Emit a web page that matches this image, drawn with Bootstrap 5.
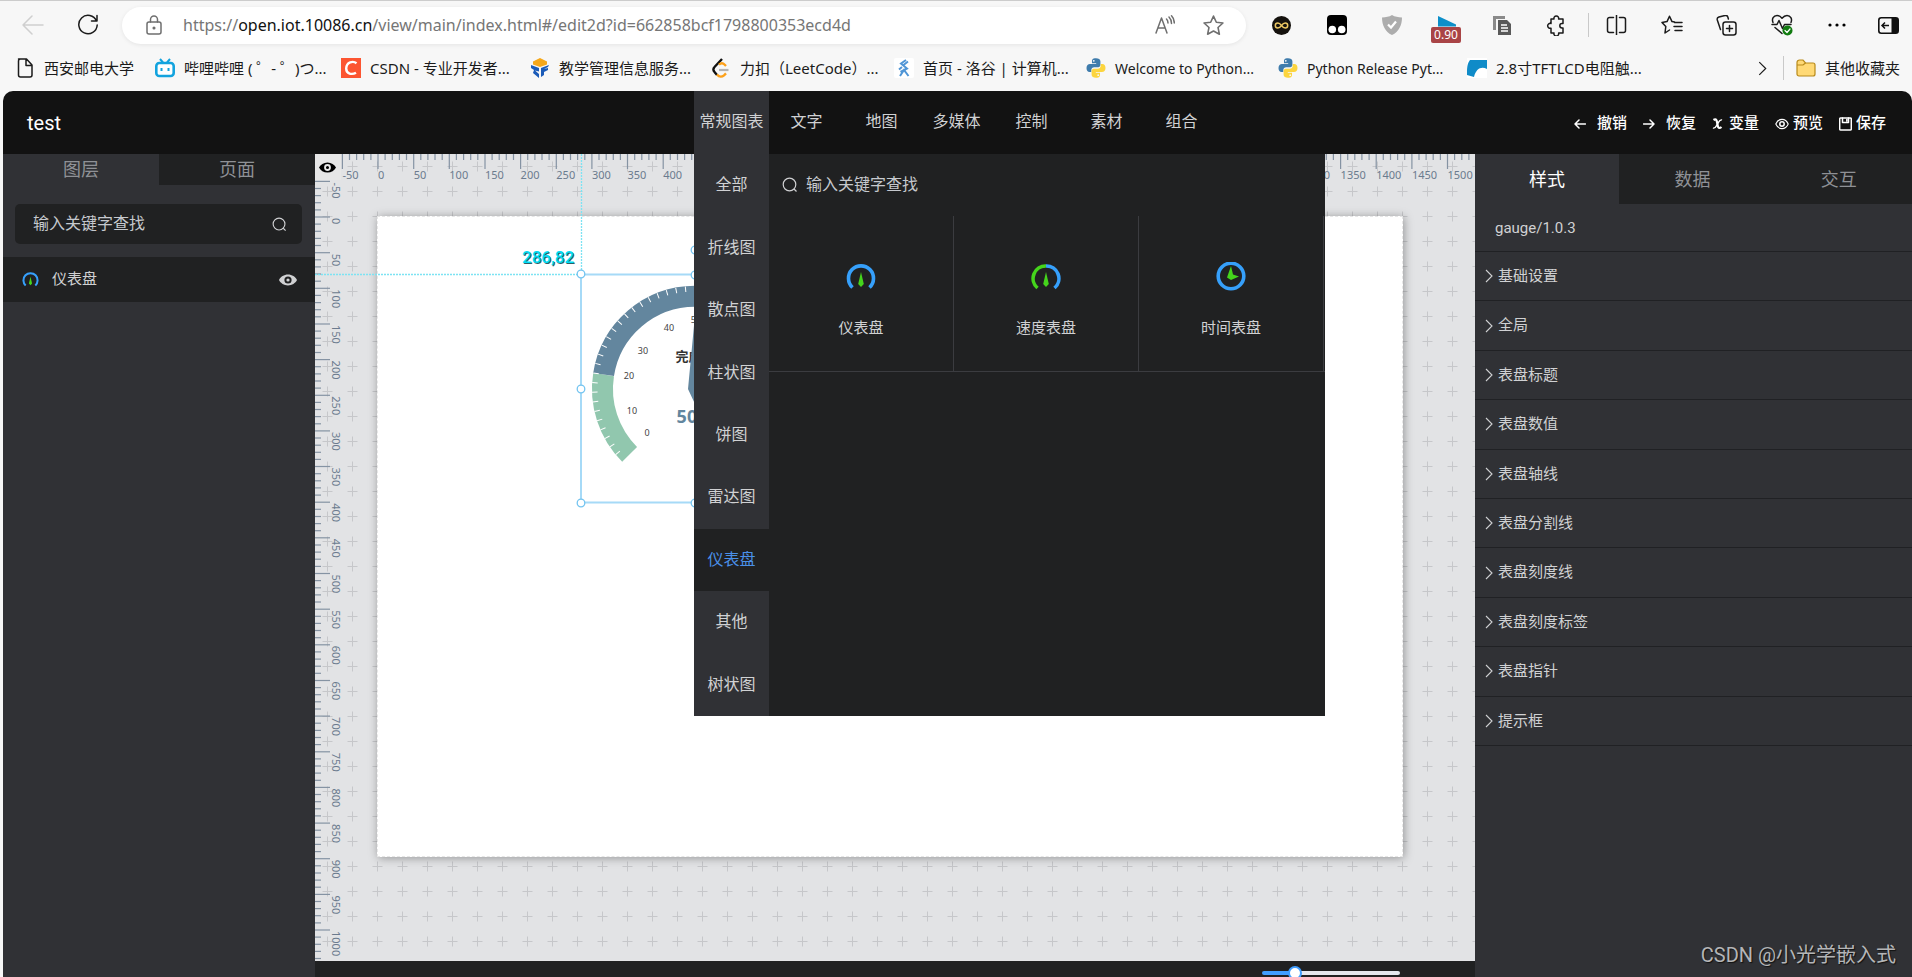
<!DOCTYPE html>
<html lang="zh-CN">
<head>
<meta charset="utf-8">
<meta name="viewport" content="width=device-width, initial-scale=1">
<title>test</title>
<link href="https://cdn.jsdelivr.net/npm/bootstrap@5.3.0/dist/css/bootstrap.min.css" rel="stylesheet">
<style>
  :root { --panel:#303135; --deep:#202122; --bar:#121212; --ink:#d0d1d3; --muted:#8f9196; }
  body { font-family: Roboto, "Noto Sans CJK SC", sans-serif; background:#f7f7f7; color:var(--ink); font-size:15px; }
  button { background:none; border:0; padding:0; color:inherit; }
  svg { display:block; flex:none; }
  .ln { fill:none; stroke:currentColor; stroke-width:1.5; stroke-linecap:round; stroke-linejoin:round; }

  /* browser chrome */
  .chrome { font-family:"Noto Sans","Noto Sans CJK SC",sans-serif; color:#1b1b1b; border-top:1px solid #ccc; }
  .toolbar { height:48px; padding-left:5px; }
  .tool { width:55px; height:40px; display:flex; align-items:center; justify-content:center; position:relative; flex:none; }
  .tool.edge { width:48px; }
  .rate { position:absolute; left:12px; top:22px; width:30px; height:16px; border-radius:2px; background:#a94446; color:#fff; font-size:12px; line-height:16px; }
  .address { height:37px; border-radius:19px; background:#fff; margin:0 8px 0 7px; padding:0 22px 0 24px; box-shadow:0 1px 4px rgba(0,0,0,.08); color:#6f6f6f; }
  .url { font-size:16px; color:#767676; white-space:nowrap; margin-left:21px; }
  .url b { font-weight:400; color:#111; }
  .vline { width:1px; height:24px; background:#c9c9c9; }
  .marks { height:42px; padding:0 12px 4px 15px; font-size:15px; }
  .marks a { color:#1b1b1b; text-decoration:none; display:flex; align-items:center; gap:9px; white-space:nowrap; margin-right:20px; }
  .marks a span { width:140px; }
  .marks a:nth-child(1) span { width:91px; }
  .marks a:nth-child(2) span { width:137px; }
  .marks a:nth-child(4) span { width:132px; }
  .marks a:nth-child(5) span { width:134px; }
  .marks a:nth-child(6) span, .marks a:nth-child(7) span { width:143px; }
  .marks a.latin { font-size:14px; }

  /* application */
  .app { margin-left:3px; border-radius:10px 10px 0 0; background:var(--bar); min-height:0; position:relative; }
  .topbar { height:63px; color:#fff; }
  .topbar h1 { font-size:20px; font-weight:400; padding-left:24px; }
  .kinds { position:relative; z-index:5; height:63px; font-size:16px; color:var(--ink); }
  .kinds > button { width:75px; padding-bottom:2px; white-space:nowrap; }
  .kinds > .active { background:var(--panel); }
  .mega { position:absolute; left:0; top:63px; width:631px; height:562px; background:var(--deep); }
  .groups { width:75px; background:var(--panel); }
  .groups button { flex:1 1 0; }
  .groups .active { background:var(--deep); color:#4a90e8; }
  .find { background:transparent; border:0; color:#c6c9ce; font-size:16px; padding:0; outline:0; }
  .find::placeholder { color:#c6c9ce; opacity:1; }
  .seek { height:62px; padding-left:13px; gap:8px; }
  .tiles { display:grid; grid-template-columns:repeat(3,1fr); padding-right:1px; border-bottom:1px solid #3b3c40; font-size:15px; }
  .tiles button { height:155px; padding-top:13px; border-right:1px solid #3b3c40; display:flex; flex-direction:column; align-items:center; justify-content:center; gap:25px; line-height:22px; }
  .acts { gap:16px; padding:2px 26px 0 0; font-weight:500; }
  .acts button { display:flex; align-items:center; gap:6px; font-weight:500; }
  .acts .wide { gap:11px; }
  .acts .snug { gap:4px; }

  .side-l { width:312px; background:var(--panel); }
  .side-l .tabs button { height:31px; flex:1 1 0; font-size:18px; line-height:31px; color:var(--muted); }
  .tabs button:not(.active) { background:var(--deep); }
  .searchbox { height:40px; margin:19px 13px 13px 12px; background:var(--deep); border-radius:5px; padding:0 15px 0 18px; }
  .layer { height:45px; background:var(--deep); padding:0 18px 0 19px; gap:13px; }

  .stage { background:#e2e3e5; min-height:0; }
  .stage svg.full { position:absolute; inset:0; width:100%; height:100%; }
  .paper { position:absolute; left:62px; top:62px; width:1026px; height:641px; background:#fff; border:1px dashed #e6e6e6; box-shadow:1px 1px 9px rgba(0,0,0,.35); }
  .corner { position:absolute; left:0; top:0; width:26px; height:26px; background:#e7e7e7; color:#000; display:flex; align-items:center; justify-content:center; padding-right:2px; }
  .rl { font:11px "Noto Sans",sans-serif; fill:#6b7b8e; stroke:none; }
  .g { font:9px "Noto Sans",sans-serif; fill:#444; text-anchor:middle; }
  .pos { font:500 17px Roboto,sans-serif; fill:#00dcf5; text-shadow:1px 1px 0 #2a6068; }
  .zoombar { height:16px; background:var(--deep); overflow:hidden; padding-right:75px; }
  .zoombar input { appearance:none; width:138px; height:24px; margin:0; background:none; flex:none; }
  .zoombar input::-webkit-slider-runnable-track { height:4px; border-radius:2px; background:linear-gradient(90deg,#409eff 24%,#e4e7ed 24%); }
  .zoombar input::-webkit-slider-thumb { appearance:none; width:14px; height:14px; margin-top:-5px; border-radius:50%; background:#fff; border:2px solid #409eff; }

  .side-r { width:437px; background:var(--panel); }
  .side-r .tabs button { height:50px; flex:1 1 0; font-size:18px; color:var(--muted); }
  .side-r .tabs .active { color:#fff; flex:0 0 33%; }
  .ver { height:48px; padding:2px 0 0 20px; font-size:15px; border-bottom:1px solid #202124; }
  .folds { height:494px; }
  .folds button { flex:1 1 0; text-align:left; padding-left:10px; border-bottom:1px solid #202124; display:flex; align-items:center; gap:5px; }
  .stamp { position:absolute; right:16px; bottom:7px; font:20px/30px Roboto,"Noto Sans CJK SC",sans-serif; color:#b4b5b7; text-shadow:1px 1px 1px #111; z-index:6; }
</style>
</head>
<body class="vh-100 d-flex flex-column overflow-hidden">

<svg width="0" height="0" class="position-absolute">
  <defs>
    <symbol id="search" viewBox="0 0 16 16"><circle cx="7.500" cy="7.500" r="6.300" fill="none" stroke="currentColor" stroke-width="1.200"/><path d="M12 12l2.500 2.500" stroke="currentColor" stroke-width="1.200"/></symbol>
    <symbol id="eye" viewBox="0 0 20 12"><path d="M10 0C5.500 0 1.800 2.500 0 6c1.800 3.500 5.500 6 10 6s8.200-2.500 10-6C18.200 2.500 14.500 0 10 0zm0 10a4 4 0 1 1 0-8 4 4 0 0 1 0 8zm0-2.200A1.800 1.800 0 1 0 10 4.200a1.800 1.800 0 0 0 0 3.600z" fill="currentColor" fill-rule="evenodd"/></symbol>
    <symbol id="gauge" viewBox="0 0 30 30"><path d="M6.500 25.500A12.500 12.500 0 1 1 23.500 25.500" fill="none" stroke="#36a0fb" stroke-width="3.600"/><path d="M15 10l2.800 12L15 25l-2.800-3z" fill="#45d51c"/></symbol>
    <symbol id="python" viewBox="0 0 20 20"><path fill="#3f7cac" d="M10 .3C6.200.3 6 2 6 3.300v2h4.200v.8H4C2 6.100.5 7.500.5 10s1.300 4 3 4h1.800v-2c0-1.600 1.300-2.800 2.900-2.800h4c1.300 0 2.200-1 2.200-2.200V3.300C14.400 1.500 12.500.3 10 .3zM7.800 1.900a.9.900 0 1 1 0 1.800.9.900 0 0 1 0-1.800z"/><path transform="rotate(180 10 10)" fill="#fcd53f" d="M10 .3C6.200.3 6 2 6 3.300v2h4.200v.8H4C2 6.100.5 7.500.5 10s1.300 4 3 4h1.800v-2c0-1.600 1.300-2.800 2.900-2.800h4c1.300 0 2.200-1 2.200-2.200V3.300C14.400 1.500 12.500.3 10 .3zM7.800 1.900a.9.900 0 1 1 0 1.800.9.900 0 0 1 0-1.800z"/></symbol>
    <symbol id="chev" viewBox="0 0 8 14"><path d="M1 1l6 6-6 6" fill="none" stroke="currentColor" stroke-width="1.100"/></symbol>
  </defs>
</svg>

<header class="chrome flex-shrink-0">
  <div class="toolbar d-flex align-items-center">
    <button class="tool" aria-label="后退"><svg class="ln" width="22" height="20" viewBox="0 0 22 20" color="#cfcfcf"><path d="M21 10H1M10 1L1 10l9 9"/></svg></button>
    <button class="tool" aria-label="刷新"><svg class="ln" width="22" height="22" viewBox="0 0 22 22" stroke-width="1.800"><path d="M19.500 7A9.200 9.200 0 1 0 20.200 11M20 1.500V7h-5.500"/></svg></button>
    <div class="address d-flex align-items-center flex-grow-1">
      <svg class="ln" width="16" height="20" viewBox="0 0 16 20"><rect x="1" y="7" width="14" height="12" rx="2"/><path d="M4.500 7V4.500a3.500 3.500 0 0 1 7 0V7"/><circle cx="8" cy="13" r=".8" fill="currentColor"/></svg>
      <div class="url flex-grow-1" role="textbox" aria-label="地址">https://<b>open.iot.10086.cn</b>/view/main/index.html#/edit2d?id=662858bcf1798800353ecd4d</div>
      <button aria-label="朗读" class="me-4 pe-1"><svg class="ln" width="20" height="20" viewBox="0 0 20 20"><path d="M1 18L6.500 3 12 18M3 13h7M11.500 4c1 1 1.500 2.500 1.500 4M14 2c1.500 1.500 2.500 3.800 2.500 6.500M16.500.800C18.300 2.600 19.300 5 19.300 8"/></svg></button>
      <button aria-label="收藏"><svg class="ln" width="21" height="21" viewBox="0 0 20 20"><path d="M10 1l2.700 5.900 6.300.7-4.700 4.300 1.300 6.400L10 15.200l-5.600 3.100 1.300-6.400L1 7.600l6.300-.7z"/></svg></button>
    </div>
    <button class="tool" aria-label="扩展一"><svg width="19" height="19" viewBox="0 0 19 19"><circle cx="9.500" cy="9.500" r="9.500" fill="#15120e"/><path d="M9.500 9.500C8 7.500 7 7 5.800 7a2.500 2.500 0 0 0 0 5c1.200 0 2.200-.5 3.700-2.500S12 7 13.200 7a2.500 2.500 0 0 1 0 5c-1.200 0-2.200-.5-3.700-2.500z" fill="none" stroke="#ecc763" stroke-width="1.500"/></svg></button>
    <button class="tool" aria-label="扩展二"><svg width="20" height="20" viewBox="0 0 20 20"><rect width="20" height="20" rx="4"/><circle cx="5.300" cy="14.500" r="3.800" fill="#fff"/><circle cx="14.700" cy="14.500" r="3.800" fill="#fff"/></svg></button>
    <button class="tool" aria-label="扩展三"><svg width="20" height="20" viewBox="0 0 20 20"><path d="M10 0c3 1.800 6 2.400 10 2.400C20 10 17 16.500 10 20 3 16.500 0 10 0 2.400 4 2.400 7 1.800 10 0z" fill="#adadad"/><path d="M6 9.500l3 3L14 6.500" fill="none" stroke="#fff" stroke-width="2.200"/></svg></button>
    <button class="tool" aria-label="扩展四"><svg width="20" height="20" viewBox="0 0 20 20"><path d="M1 1l18 8.500v2H1z" fill="#0d8fc9"/></svg><span class="rate">0.90</span></button>
    <button class="tool" aria-label="扩展五"><svg width="20" height="21" viewBox="0 0 20 21"><path d="M1 15V1h12v3H4v11z" fill="#8a8a8a"/><path d="M6 5h9l4 4v11H6z" fill="#595959"/><path d="M9 10h6M9 13h7M9 16h7" stroke="#fff" stroke-width="1.400"/></svg></button>
    <button class="tool" aria-label="扩展"><svg class="ln" width="21" height="21" viewBox="0 0 21 21"><path d="M5 4h3a2.400 2.400 0 1 1 4.600 0H17v4.500h-1a2.200 2.200 0 0 0 0 4.400h1V18h-4.400a2.400 2.400 0 1 1-4.600 0H5v-4.800A2.500 2.500 0 1 1 5 8.500z"/></svg></button>
    <div class="ps-1"><div class="vline"></div></div>
    <button class="tool" aria-label="分屏"><svg class="ln" width="21" height="20" viewBox="0 0 21 20"><path d="M10.500 0v20M7.500 2.500H3.500a2 2 0 0 0-2 2v11a2 2 0 0 0 2 2h4M13.500 2.500h4a2 2 0 0 1 2 2v11a2 2 0 0 1-2 2h-4"/></svg></button>
    <button class="tool" aria-label="收藏夹"><svg class="ln" width="22" height="20" viewBox="0 0 22 20"><path d="M13.500 7L11 6.600 8.500 1.200 6 6.600l-5 .9 3.800 4L4 18l4.500-3M13.500 7.500H21M13 11.500h8M14 15.500h7"/></svg></button>
    <button class="tool" aria-label="集锦"><svg class="ln" width="21" height="21" viewBox="0 0 21 21"><rect x="7" y="7" width="13" height="13" rx="2.500"/><path d="M13.500 10.500v6M10.500 13.500h6M4.500 14.500L1.300 5a2.500 2.500 0 0 1 1.600-3l6-1.500a2.500 2.500 0 0 1 3 1.700l.5 1.800"/></svg></button>
    <button class="tool" aria-label="浏览器概要"><svg class="ln" width="22" height="22" viewBox="0 0 22 22"><path d="M2 8.500C.5 5 2.500 1.500 6 1.500c2 0 3.500 1 5 2.800 1.500-1.800 3-2.800 5-2.800 3.500 0 5.500 3.500 4 7M1 10.500h5l2-4 3.500 8 2-4H20M4 13.500l7 6"/><circle cx="16.500" cy="16.500" r="5" fill="#117b10" stroke="none"/><path d="M14 16.500l2 2 3-3.500" stroke="#fff" stroke-width="1.200"/></svg></button>
    <button class="tool" aria-label="更多"><svg width="18" height="4" viewBox="0 0 18 4"><circle cx="2" cy="2" r="1.600"/><circle cx="9" cy="2" r="1.600"/><circle cx="16" cy="2" r="1.600"/></svg></button>
    <button class="tool edge" aria-label="边栏"><svg width="21" height="17" viewBox="0 0 21 17"><rect x=".8" y=".8" width="19.400" height="15.400" rx="2.500" fill="none" stroke="#111" stroke-width="1.600"/><path d="M13.500 1H20v15h-6.500z" fill="#111"/><path d="M4 8.500h7M7 5.500l-3 3 3 3" fill="none" stroke="#111" stroke-width="1.500"/></svg></button>
  </div>
  <nav class="marks d-flex align-items-center">
    <a href="#"><svg class="ln" width="20" height="20" viewBox="0 0 20 20"><path d="M3.500 1h8l5.500 6v10a2 2 0 0 1-2 2h-9.500a2 2 0 0 1-2-2V3a2 2 0 0 1 2-2M11 1v6.500h6"/></svg><span>西安邮电大学</span></a>
    <a href="#"><svg width="20" height="20" viewBox="0 0 20 20"><path d="M5 1l3 3.500M15 1l-3 3.500" stroke="#13a3de" stroke-width="2"/><rect x="1.300" y="5" width="17.400" height="13" rx="3" fill="#fff" stroke="#13a3de" stroke-width="2.600"/><path d="M6.500 10v3M13.500 10v3" stroke="#13a3de" stroke-width="2"/></svg><span>哔哩哔哩 ( ゜- ゜)つ...</span></a>
    <a href="#"><svg width="20" height="20" viewBox="0 0 20 20"><rect width="20" height="20" fill="#fc5531"/><path d="M15.500 5.200C12 2.600 5.500 4 5.200 10.500c0 5.500 5.800 6.500 9.800 4.200" fill="none" stroke="#fff" stroke-width="2.400"/></svg><span>CSDN - 专业开发者...</span></a>
    <a href="#"><svg width="20" height="20" viewBox="0 0 20 20"><path d="M10 0l7 3.500v3L10 9 3 6.500v-3z" fill="#f6a81a"/><path d="M1 7l8 3v3.500l-4-1 4 3.500v4l-6-5 1-3-3-2zM19 7l-8 3v9l3-2v-3l4-2v-2l-4 1 4-2z" fill="#1b5bb8"/></svg><span>教学管理信息服务...</span></a>
    <a href="#"><svg width="20" height="20" viewBox="0 0 20 20"><path d="M11 1L3.500 9c-1.500 1.500-1.500 3.500 0 5L6 17" fill="none" stroke="#111" stroke-width="2.400"/><path d="M8 6.500c2-1.600 4-1.600 5.500 0l1.500 1.500M6 16.500c2.500 3 5 2.500 7 .8l2-2" fill="none" stroke="#fda11a" stroke-width="2.400"/><path d="M8 12h9.500" stroke="#b3b3b3" stroke-width="2.200"/></svg><span>力扣（LeetCode）...</span></a>
    <a href="#"><svg width="20" height="20" viewBox="0 0 20 20"><rect width="20" height="20" rx="2" fill="#fff"/><path d="M12 2L7 5.500l6 5-6.500 3.500M8 9l-3 2.500M6 18l4-6 4.500 6M14 3.500L9.500 7" fill="none" stroke="#4f95d6" stroke-width="2"/></svg><span>首页 - 洛谷 | 计算机...</span></a>
    <a href="#" class="latin"><svg width="20" height="20"><use href="#python"/></svg><span>Welcome to Python...</span></a>
    <a href="#" class="latin"><svg width="20" height="20"><use href="#python"/></svg><span>Python Release Pyt...</span></a>
    <a href="#"><svg width="20" height="20" viewBox="0 0 20 20"><rect width="20" height="20" fill="#fff"/><path d="M3 2h17v9c-6-3-11 0-13 8L0 17C0 10 0 6 3 2z" fill="#0f8bc8"/></svg><span>2.8寸TFTLCD电阻触...</span></a>
    <div class="ms-auto d-flex align-items-center">
      <button aria-label="更多书签"><svg width="9" height="15"><use href="#chev"/></svg></button>
      <div class="vline ms-3 me-2"></div>
      <a href="#" class="m-0 ms-1"><svg width="20" height="18" viewBox="0 0 20 18"><path d="M1 3.500A2.500 2.500 0 0 1 3.500 1H7l2.500 3H17a2 2 0 0 1 2 2v9a2 2 0 0 1-2 2H3a2 2 0 0 1-2-2z" fill="#ffd975" stroke="#b88a1a" stroke-width="1.200"/><path d="M1 6h6l2.500-2" fill="none" stroke="#b88a1a" stroke-width="1.200"/></svg><span class="w-auto">其他收藏夹</span></a>
    </div>
  </nav>
</header>

<main class="app flex-grow-1 d-flex flex-column">
  <div class="topbar d-flex flex-shrink-0 align-items-center">
    <h1 class="m-0" style="flex:1 1 0">test</h1>
    <nav class="kinds d-flex">
      <button class="active">常规图表</button><button>文字</button><button>地图</button><button>多媒体</button><button>控制</button><button>素材</button><button>组合</button>
      <div class="mega d-flex">
        <div class="groups d-flex flex-column">
          <button>全部</button><button>折线图</button><button>散点图</button><button>柱状图</button><button>饼图</button><button>雷达图</button><button class="active">仪表盘</button><button>其他</button><button>树状图</button>
        </div>
        <div class="flex-grow-1">
          <label class="seek d-flex align-items-center"><svg width="16" height="16"><use href="#search"/></svg><input class="find flex-grow-1" placeholder="输入关键字查找" aria-label="查找组件"></label>
          <div class="tiles">
            <button><svg width="30" height="30"><use href="#gauge"/></svg>仪表盘</button>
            <button><svg width="30" height="30" viewBox="0 0 30 30"><path d="M6.500 26A12.500 12.500 0 0 1 15 4" fill="none" stroke="#45d51c" stroke-width="3.600"/><path d="M15 4A12.500 12.500 0 0 1 23.500 26" fill="none" stroke="#36a0fb" stroke-width="3.600"/><path d="M15 10l2.800 12L15 25l-2.800-3z" fill="#45d51c"/></svg>速度表盘</button>
            <button><svg width="30" height="30" viewBox="0 0 30 30"><circle cx="15" cy="14" r="12.800" fill="none" stroke="#36a0fb" stroke-width="3.600"/><path d="M15 4l2 8.500 6 2-8 3.500-4-2.500z" fill="#45d51c"/></svg>时间表盘</button>
          </div>
        </div>
      </div>
    </nav>
    <div class="acts d-flex justify-content-end" style="flex:1 1 0">
      <button class="wide"><svg class="ln" width="12" height="10" viewBox="0 0 12 10"><path d="M11.500 5H1M5 1L1 5l4 4"/></svg>撤销</button>
      <button class="wide"><svg class="ln" width="12" height="10" viewBox="0 0 12 10"><path d="M.5 5H11M7 1l4 4-4 4"/></svg>恢复</button>
      <button><svg width="11" height="12" viewBox="0 0 11 12"><path d="M1.500 2C3.500.6 4.500 1.500 5 4l.8 4c.4 2.200 1.700 2.600 3.700 1" fill="none" stroke="#fff" stroke-width="2.200"/><path d="M10 2C8 1 7 3.500 5.500 6S3 11 1 10" fill="none" stroke="#fff" stroke-width="1.400"/></svg>变量</button>
      <button class="snug"><svg class="ln" width="14" height="12" viewBox="0 0 14 12"><path d="M.8 6C3.500-.2 10.500-.2 13.200 6 10.500 12.200 3.500 12.200.8 6z" stroke-width="1.100"/><circle cx="7" cy="6" r="2.200"/></svg>预览</button>
      <button class="snug"><svg class="ln" width="13" height="14" viewBox="0 0 13 14"><rect x=".7" y="1" width="11.600" height="12" rx="1"/><path d="M3.500 1v4.500h6V1M7.800 2.500V4"/></svg>保存</button>
    </div>
  </div>

  <div class="d-flex flex-grow-1" style="min-height:0">
    <aside class="side-l flex-shrink-0">
      <div class="tabs d-flex"><button class="active">图层</button><button>页面</button></div>
      <label class="searchbox d-flex align-items-center"><input class="find flex-grow-1" placeholder="输入关键字查找" aria-label="查找图层"><svg width="15" height="15"><use href="#search"/></svg></label>
      <div class="layer d-flex align-items-center"><svg width="17" height="17"><use href="#gauge"/></svg><span class="flex-grow-1">仪表盘</span><button aria-label="显示"><svg width="18" height="12"><use href="#eye"/></svg></button></div>
    </aside>

    <section class="flex-grow-1 d-flex flex-column" style="min-width:0">
      <div class="stage flex-grow-1 position-relative overflow-hidden">
        <svg class="full">
          <defs><pattern id="cross" width="25" height="25" patternUnits="userSpaceOnUse"><path d="M12.500 7.500v10M7.500 12.500h10" stroke="#c6c7ca" stroke-width="1"/></pattern></defs>
          <rect width="100%" height="100%" fill="url(#cross)"/>
          <g id="ruler" stroke="#8593a3" stroke-width="1.200"></g>
          <g id="nums"></g>
        </svg>
        <div class="paper"></div>
        <svg class="full">
          <path d="M266.500 0v120M0 120.500h266" stroke="#7de3f3" stroke-width="1.300" stroke-dasharray="2 1"/>
          <g transform="translate(380 235)">
            <path d="M-65.400 65.400A92.500 92.500 0 0 1-91.400-14.500" fill="none" stroke="#91c7ae" stroke-width="21"/>
            <path d="M-91.400-14.500A92.500 92.500 0 0 1 91.400-14.500" fill="none" stroke="#63869e" stroke-width="21"/>
            <g id="dial" stroke="#fff" stroke-width="1"></g>
            <text class="g" x="-48" y="47">0</text><text class="g" x="-63" y="25">10</text><text class="g" x="-66" y="-10">20</text><text class="g" x="-52" y="-35">30</text><text class="g" x="-26" y="-58">40</text><text class="g" x="1" y="-66">50</text>
            <text x="0" y="-28" text-anchor="middle" font-size="13" font-weight="700" fill="#333" font-family="Noto Sans CJK SC">完成率</text>
            <path d="M0-74L7 0 0 15-7 0z" fill="#63869e"/>
            <text x="0" y="34" text-anchor="middle" font-size="18" font-weight="700" fill="#63869e" font-family="Noto Sans">50%</text>
          </g>
          <path d="M266 120.500h228v228h-228z" fill="none" stroke="#a6daf7" stroke-width="2"/>
          <path d="M380 96v24" stroke="#35a9f2" stroke-width="2"/>
          <g fill="#fff" stroke="#74c4f0" stroke-width="1.300"><circle cx="266" cy="120" r="3.800"/><circle cx="266" cy="235" r="3.800"/><circle cx="266" cy="349" r="3.800"/><circle cx="380" cy="96" r="3.800"/><circle cx="380" cy="121" r="3.800"/><circle cx="380" cy="349" r="3.800"/></g>
          <text class="pos" x="207" y="109">286,82</text>
        </svg>
        <button class="corner" aria-label="显示标尺"><svg width="17" height="11"><use href="#eye"/></svg></button>
      </div>
      <div class="zoombar d-flex justify-content-end flex-shrink-0"><input type="range" min="0" max="100" value="21" aria-label="缩放"></div>
    </section>

    <aside class="side-r flex-shrink-0">
      <div class="tabs d-flex"><button class="active">样式</button><button>数据</button><button>交互</button></div>
      <div class="ver d-flex align-items-center">gauge/1.0.3</div>
      <div class="folds d-flex flex-column" id="folds"></div>
    </aside>
  </div>
  <div class="stamp">CSDN @小光学嵌入式</div>
</main>

<script src="https://cdn.jsdelivr.net/npm/bootstrap@5.3.0/dist/js/bootstrap.bundle.min.js"></script>
<script>
  // property groups of the selected component
  document.getElementById('folds').innerHTML =
    ['基础设置','全局','表盘标题','表盘数值','表盘轴线','表盘分割线','表盘刻度线','表盘刻度标签','表盘指针','提示框']
    .map(t => `<button><svg width="8" height="14"><use href="#chev"/></svg>${t}</button>`).join('');

  // rulers: one tick for every 10 units, a label at every 50
  const scale = 0.713, origin = 63;
  let ticks = '', nums = '';
  for (let v = -50; v <= 1550; v += 10) {
    const p = Math.round((origin + v * scale) * 10) / 10, major = v % 50 === 0, len = major ? 15 : 6;
    ticks += `<path d="M${p} 0v${len}"/>`;
    if (v <= 1050) ticks += `<path d="M0 ${p}h${len}"/>`;
    if (major) {
      if (v <= 1500) nums += `<text class="rl" x="${p}" y="25">${v}</text>`;
      if (v <= 1000) nums += `<text class="rl" transform="translate(17 ${p + 1}) rotate(90)">${v}</text>`;
    }
  }
  document.getElementById('ruler').innerHTML = ticks;
  document.getElementById('nums').innerHTML = nums;

  // dial: fifty divisions over 270 degrees
  let marks = '';
  for (let i = 1; i < 50; i++) marks += `<path d="M0-103v5.500" transform="rotate(${-135 + i * 5.4})"/>`;
  document.getElementById('dial').innerHTML = marks;
</script>
</body>
</html>
